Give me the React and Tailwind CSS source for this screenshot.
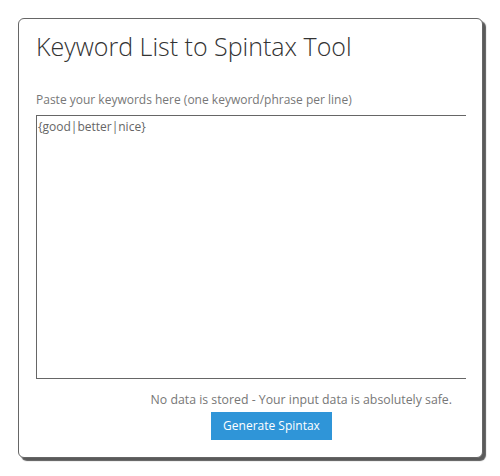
export default function App() {
  return (
    <div className="w-[500px] h-[476px] bg-white pt-[18px] pl-[18px] font-['Open_Sans',sans-serif]">
      <div className="w-[465px] h-[440px] border border-[#666] rounded-[6px] shadow-[3px_3px_1px_#5a5a5a] bg-white pl-[17px] pt-[12px]">
        <h1 className="text-[25px] leading-[30px] font-light text-[#333]">
          Keyword List to Spintax Tool
        </h1>
        <label className="block mt-[30px] text-[12px] leading-[18px] text-[#777]">
          Paste your keywords here (one keyword/phrase per line)
        </label>
        <textarea
          className="block mt-[6px] w-[430px] h-[264px] border-t border-l border-b border-r-0 border-[#666] px-[1px] py-[2px] text-[12px] leading-[18px] text-[#666] resize-none outline-none"
          defaultValue="{good|better|nice}"
        />
        <p className="mt-[12px] w-[416px] text-right text-[12.3px] leading-[18px] text-[#777]">
          No data is stored - Your input data is absolutely safe.
        </p>
        <button className="mt-[3px] ml-[175px] w-[121px] h-[28px] bg-[#2f95d8] text-white text-[12px] leading-[18px]">
          Generate Spintax
        </button>
      </div>
    </div>
  );
}
